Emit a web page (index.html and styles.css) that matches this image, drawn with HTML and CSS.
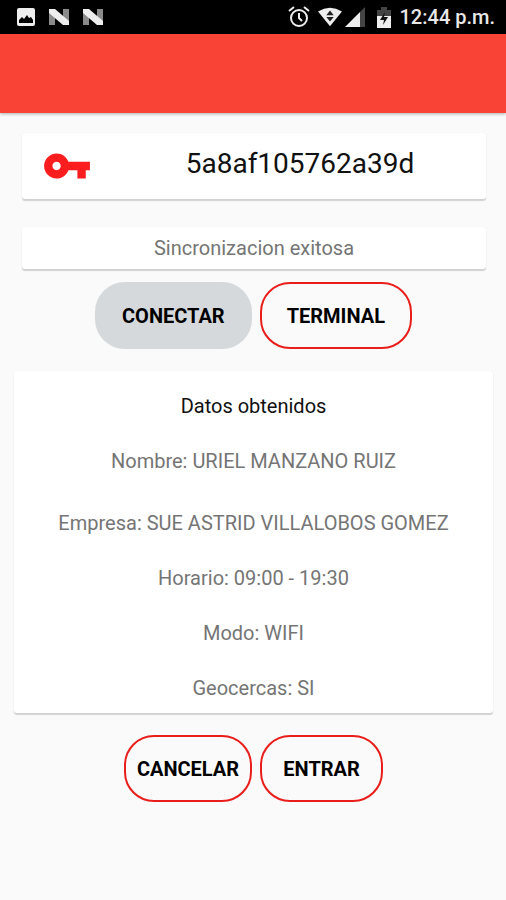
FILE: index.html
```html
<!DOCTYPE html>
<html lang="es">
<head>
<meta charset="utf-8">
<meta name="viewport" content="width=device-width, initial-scale=1">
<title>Terminal</title>
<link rel="stylesheet" href="styles.css">
</head>
<body>
<div class="status">
  <div class="status-group notifications">
    <svg width="20" height="20" viewBox="0 0 20 20" aria-hidden="true"><rect x="1" y="1" width="18" height="18" rx="2" fill="#eee"/><path d="M3 16v-3l3-3 2 2 3-4 2 3 2-1 2 3v3z" fill="#000"/></svg>
    <svg width="22" height="18" viewBox="0 0 22 18" aria-hidden="true"><path d="M1 4l6 4v9H1zM15 1h6v13l-6-4z" fill="#8a8a8a"/><path d="M1 1h6l14 12v4h-6L1 5z" fill="#eee"/></svg>
    <svg width="22" height="18" viewBox="0 0 22 18" aria-hidden="true"><path d="M1 4l6 4v9H1zM15 1h6v13l-6-4z" fill="#8a8a8a"/><path d="M1 1h6l14 12v4h-6L1 5z" fill="#eee"/></svg>
  </div>
  <div class="status-group system">
    <svg width="22" height="22" viewBox="0 0 22 22" fill="none" stroke="#eee" stroke-width="2" aria-hidden="true"><circle cx="11" cy="12" r="8"/><path d="M11 7v5l3 3M1 5l5-4M21 5l-5-4"/></svg>
    <svg width="24" height="20" viewBox="0 0 26 20" aria-hidden="true"><path d="M0 4Q13-4 26 4L13 20z" fill="#eee"/><path d="M13 3l4 5H9zM9 10h8l-4 5z" fill="#222"/></svg>
    <svg width="20" height="20" viewBox="0 0 20 20" aria-hidden="true"><path d="M15 5l5-5v20h-5z" fill="#444"/><path d="M0 20L15 5v15z" fill="#eee"/></svg>
    <svg class="battery" width="14" height="21" viewBox="0 0 14 21" aria-hidden="true"><path d="M0 3h4V0h6v3h4v7H0z" fill="#444"/><path d="M0 9h14v12H0z" fill="#eee"/><path d="M8 5l-5 8h4l-1 5 5-8H7z" fill="#111"/></svg>
    <time class="clock">12:44 p.m.</time>
  </div>
</div>
<header class="appbar"></header>
<main class="content">
  <section class="card device">
    <svg class="key" viewBox="0 0 24 24" fill="#fc1d1f" aria-hidden="true"><path d="M12.65 10C11.83 7.67 9.61 6 7 6c-3.31 0-6 2.69-6 6s2.69 6 6 6c2.61 0 4.83-1.67 5.65-4H17v4h4v-4h2v-4H12.65zM7 14c-1.1 0-2-.9-2-2s.9-2 2-2 2 .9 2 2-.9 2-2 2z"/></svg>
    <span class="device-id">5a8af105762a39d</span>
  </section>
  <p class="card message">Sincronizacion exitosa</p>
  <div class="actions">
    <button class="btn btn-filled" type="button">CONECTAR</button>
    <button class="btn" type="button">TERMINAL</button>
  </div>
  <section class="card data">
    <h1 class="data-title">Datos obtenidos</h1>
    <p>Nombre: URIEL MANZANO RUIZ</p>
    <p class="company">Empresa: SUE ASTRID VILLALOBOS GOMEZ</p>
    <p>Horario: 09:00 - 19:30</p>
    <p>Modo: WIFI</p>
    <p>Geocercas: SI</p>
  </section>
  <div class="actions">
    <button class="btn btn-compact" type="button">CANCELAR</button>
    <button class="btn btn-compact" type="button">ENTRAR</button>
  </div>
</main>
</body>
</html>
```
FILE: styles.css
```css
* {
  box-sizing: border-box;
}

body {
  margin: 0;
  min-height: 100vh;
  background: #fafafa;
  color: #757575;
  font: 20px/24px Roboto, sans-serif;
}

p,
h1 {
  margin: 0;
}

.status {
  display: flex;
  align-items: center;
  justify-content: space-between;
  height: 34px;
  padding: 0 11px 0 16px;
  background: #000;
}

.status-group {
  display: flex;
  align-items: center;
}

.notifications {
  gap: 12px;
}

.system svg {
  margin-right: 8px;
}

.system svg:nth-child(2) {
  margin-right: 3px;
}

.system .battery {
  margin: 0 9px 0 4px;
}

.clock {
  color: #e8e8e8;
  font-weight: 500;
}

.appbar {
  height: 79px;
  background: #f94336;
  box-shadow: 0 1px 3px rgba(0, 0, 0, 0.3);
}

.content {
  display: flex;
  flex-direction: column;
  padding: 20px 13px 20px 14px;
}

.card {
  background: #fff;
  border-radius: 3px;
  box-shadow: 0 2px 1px #d2d2d2, 0 0 1px #e4e4e4;
  text-align: center;
}

.device {
  display: flex;
  align-items: center;
  height: 66px;
  margin: 0 7px 0 8px;
  padding: 0 20px;
}

.key {
  flex: none;
  width: 50px;
  height: 50px;
}

.device-id {
  flex: 1;
  padding: 0 0 4px 42px;
  color: #111;
  font-size: 28px;
  line-height: 32px;
}

.message {
  margin: 28px 7px 0 8px;
  padding: 9px 0;
}

.actions {
  display: flex;
  justify-content: center;
  gap: 8px;
  margin-top: 13px;
}

.btn {
  height: 67px;
  padding: 0 25px;
  border: 2px solid #e91e1a;
  border-radius: 30px;
  background: transparent;
  color: #000;
  font: 700 20px/24px Roboto, sans-serif;
}

.btn-filled {
  border-color: #d5d9dc;
  background: #d5d9dc;
}

.btn-compact {
  min-width: 123px;
  padding: 0 11px;
}

.data {
  display: grid;
  gap: 31px;
  margin-top: 22px;
  padding: 23px 0 13px;
}

.data-title {
  color: #111;
  font: inherit;
}

.company {
  padding-top: 7px;
}

.data + .actions {
  margin-top: 22px;
}
```
